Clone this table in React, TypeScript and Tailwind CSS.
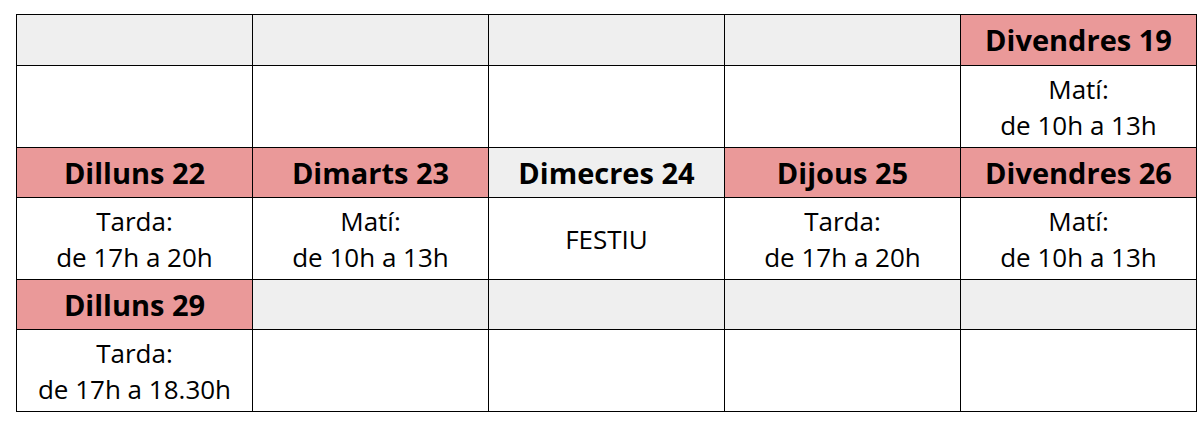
import React from "react";

type Cell = { head?: string; tone?: "pink" | "grey"; body?: string[] };

const rows: Cell[][] = [
  [
    { tone: "grey" },
    { tone: "grey" },
    { tone: "grey" },
    { tone: "grey" },
    { head: "Divendres 19", tone: "pink", body: ["Matí:", "de 10h a 13h"] },
  ],
  [
    { head: "Dilluns 22", tone: "pink", body: ["Tarda:", "de 17h a 20h"] },
    { head: "Dimarts 23", tone: "pink", body: ["Matí:", "de 10h a 13h"] },
    { head: "Dimecres 24", tone: "grey", body: ["FESTIU"] },
    { head: "Dijous 25", tone: "pink", body: ["Tarda:", "de 17h a 20h"] },
    { head: "Divendres 26", tone: "pink", body: ["Matí:", "de 10h a 13h"] },
  ],
  [
    { head: "Dilluns 29", tone: "pink", body: ["Tarda:", "de 17h a 18.30h"] },
    { tone: "grey" },
    { tone: "grey" },
    { tone: "grey" },
    { tone: "grey" },
  ],
];

const App = () => {
  return (
    <div className="bg-white pt-[14px] pl-[16px] font-['Open_Sans',sans-serif] text-black">
      <table className="table-fixed border-collapse w-[1181px]">
        <tbody>
          {rows.map((week, i) => (
            <React.Fragment key={i}>
              <tr className={i === 0 ? "h-[51px]" : "h-[50px]"}>
                {week.map((c, j) => (
                  <td
                    key={j}
                    className={
                      "border border-black text-center text-[29px] leading-[36px] font-bold p-0 " +
                      (c.tone === "pink" ? "bg-[#ea9999]" : "bg-[#efefef]")
                    }
                  >
                    {c.head}
                  </td>
                ))}
              </tr>
              <tr className="h-[82px]">
                {week.map((c, j) => (
                  <td
                    key={j}
                    className="border border-black text-center text-[26px] leading-[36px] p-0 bg-white"
                  >
                    {c.body?.map((line) => (
                      <div key={line}>{line}</div>
                    ))}
                  </td>
                ))}
              </tr>
            </React.Fragment>
          ))}
        </tbody>
      </table>
    </div>
  );
};

export default App;
